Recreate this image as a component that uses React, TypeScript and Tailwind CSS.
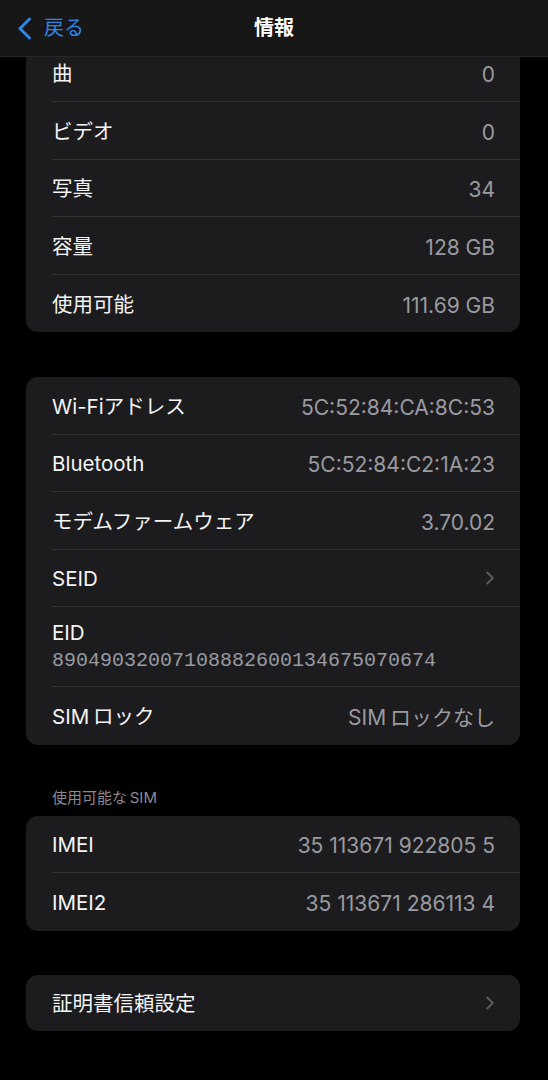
import { ChevronRight } from 'lucide-react';

const FONT = '"Inter", "Noto Sans CJK JP", sans-serif';

type Row = { label: string; value?: string; chevron?: boolean };

const MEDIA: Row[] = [
  { label: '曲', value: '0' },
  { label: 'ビデオ', value: '0' },
  { label: '写真', value: '34' },
  { label: '容量', value: '128 GB' },
  { label: '使用可能', value: '111.69 GB' },
];

const IMEI: Row[] = [
  { label: 'IMEI', value: '35 113671 922805 5' },
  { label: 'IMEI2', value: '35 113671 286113 4' },
];

function InfoRow({ row, last }: { row: Row; last?: boolean }) {
  return (
    <div className="pl-[26px]">
      <div
        className={`h-[57.5px] flex items-center justify-between pr-[25px] pt-[4px] ${last ? '' : 'border-b border-[#323234]'}`}
      >
        <span className="text-[20.5px] text-[#f4f4f4]">{row.label}</span>
        {row.chevron ? (
          <ChevronRight size={22} strokeWidth={2.2} className="text-[#5c5c60] -mr-[6px] -mt-[3px]" />
        ) : (
          <span className="text-[21px] text-[#9a9aa0]">{row.value}</span>
        )}
      </div>
    </div>
  );
}

function Card({ children, className = '' }: { children: React.ReactNode; className?: string }) {
  return <div className={`ml-[26px] mr-[28px] bg-[#1c1c1e] rounded-[12px] overflow-hidden ${className}`}>{children}</div>;
}

export default function App() {
  return (
    <div className="min-h-[1080px] bg-black pb-10" style={{ fontFamily: FONT }}>
      <header className="sticky top-0 z-10 h-[57px] bg-[#171717] border-b border-[#262628] flex items-center relative">
        <div className="flex items-center pl-[17px] text-[#2f86e6]">
          <svg width="15" height="23" viewBox="0 0 15 23" fill="none">
            <path d="M12.5 2 L3 11.5 L12.5 21" stroke="currentColor" strokeWidth="3" strokeLinecap="round" strokeLinejoin="round" />
          </svg>
          <span className="text-[20px] ml-[12px]">戻る</span>
        </div>
        <h1 className="absolute left-1/2 -translate-x-1/2 text-[20px] font-bold text-white">情報</h1>
      </header>

      <Card className="-mt-[12.5px] rounded-t-none">
        {MEDIA.map((r, i) => (
          <InfoRow key={r.label} row={r} last={i === MEDIA.length - 1} />
        ))}
      </Card>

      <Card className="mt-[45px]">
        <InfoRow row={{ label: 'Wi-Fiアドレス', value: '5C:52:84:CA:8C:53' }} />
        <InfoRow row={{ label: 'Bluetooth', value: '5C:52:84:C2:1A:23' }} />
        <InfoRow row={{ label: 'モデムファームウェア', value: '3.70.02' }} />
        <InfoRow row={{ label: 'SEID', chevron: true }} />
        <div className="pl-[26px]">
          <div className="h-[80px] flex flex-col justify-center border-b border-[#323234] pr-[25px] pt-[2px]">
            <span className="text-[20.5px] text-[#f4f4f4] leading-[26px]">EID</span>
            <span
              className="text-[20px] text-[#9a9aa0] leading-[30px]"
              style={{ fontFamily: '"Liberation Mono", monospace' }}
            >
              89049032007108882600134675070674
            </span>
          </div>
        </div>
        <InfoRow row={{ label: 'SIM\u2009ロック', value: 'SIM\u2009ロックなし' }} last />
      </Card>

      <div className="mt-[44px] mb-[9px] pl-[52px] text-[15px] leading-[18px] text-[#8a8a8f]">使用可能な{'\u2009'}SIM</div>

      <Card>
        {IMEI.map((r, i) => (
          <InfoRow key={r.label} row={r} last={i === IMEI.length - 1} />
        ))}
      </Card>

      <Card className="mt-[44px]">
        <div className="pl-[26px]">
          <div className="h-[56px] flex items-center justify-between pr-[25px] pt-[3px]">
            <span className="text-[20.5px] text-[#f4f4f4]">証明書信頼設定</span>
            <ChevronRight size={22} strokeWidth={2.2} className="text-[#5c5c60] -mr-[6px] -mt-[3px]" />
          </div>
        </div>
      </Card>
    </div>
  );
}
